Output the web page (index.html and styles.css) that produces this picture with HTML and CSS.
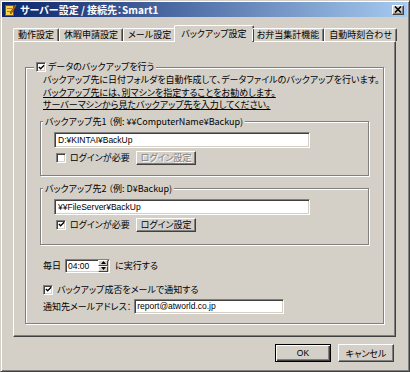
FILE: index.html
```html
<!DOCTYPE html>
<html lang="ja">
<head>
    <meta charset="UTF-8">
    <title>サーバー設定 / 接続先：Smart1</title>
    <link rel="stylesheet" href="styles.css">
</head>
<body>
    <div class="window">
        <div class="titlebar">
            <svg class="app-icon" width="13" height="13" viewBox="0 0 13 13">
                <rect x="1.5" y="2.5" width="8" height="10" fill="#f6d24a" stroke="#7a5a10"/>
                <line x1="3" y1="5.5" x2="8" y2="5.5" stroke="#b08020"/>
                <line x1="3" y1="8.5" x2="8" y2="8.5" stroke="#b08020"/>
                <path d="M6 10 L11.5 1.5 L12.5 2.5 L7 11 Z" fill="#e07020" stroke="#6a3000" stroke-width="0.6"/>
            </svg>
            <span class="title">サーバー設定 / 接続先：Smart1</span>
            <span class="close-btn">
                <svg width="8" height="7" viewBox="0 0 8 7">
                    <path d="M1 0.5 L7 6.5 M7 0.5 L1 6.5" stroke="#000" stroke-width="1.6"/>
                </svg>
            </span>
        </div>

        <div class="tabs">
            <div class="tab">動作設定</div>
            <div class="tab">休暇申請設定</div>
            <div class="tab">メール設定</div>
            <div class="tab active">バックアップ設定</div>
            <div class="tab">お弁当集計機能</div>
            <div class="tab">自動時刻合わせ</div>
        </div>

        <div class="panel">
            <fieldset class="group main-group">
                <legend>
                    <span class="check">
                        <svg width="8" height="8" viewBox="0 0 8 8"><path d="M1 3.5 L3 5.5 L7 1.5" fill="none" stroke="#000" stroke-width="1.5"/></svg>
                    </span>
                    データのバックアップを行う
                </legend>
                <div class="main-body">
                    <p class="note">
                        バックアップ先に日付フォルダを自動作成して、データファイルのバックアップを行います。<br>
                        <u>バックアップ先には、別マシンを指定することをお勧めします。</u><br>
                        <u>サーバーマシンから見たバックアップ先を入力してください。</u>
                    </p>

                    <fieldset class="group sub-group">
                        <legend>バックアップ先1 （例: ¥¥ComputerName¥Backup)</legend>
                        <div class="sub-body">
                            <div class="textbox path-box">D:¥KINTAI¥BackUp</div>
                            <div class="row login-row">
                                <span class="check"></span>
                                <span class="label">ログインが必要</span>
                                <span class="button small disabled">ログイン設定</span>
                            </div>
                        </div>
                    </fieldset>

                    <fieldset class="group sub-group second">
                        <legend>バックアップ先2 （例: D¥Backup)</legend>
                        <div class="sub-body">
                            <div class="textbox path-box">¥¥FileServer¥BackUp</div>
                            <div class="row login-row">
                                <span class="check">
                                    <svg width="8" height="8" viewBox="0 0 8 8"><path d="M1 3.5 L3 5.5 L7 1.5" fill="none" stroke="#000" stroke-width="1.5"/></svg>
                                </span>
                                <span class="label">ログインが必要</span>
                                <span class="button small">ログイン設定</span>
                            </div>
                        </div>
                    </fieldset>

                    <div class="row time-row">
                        <span>毎日</span>
                        <span class="textbox spin-box">
                            <span class="spin-value">04:00</span>
                            <span class="spin">
                                <span class="spin-btn"><svg width="5" height="3" viewBox="0 0 5 3"><path d="M2.5 0 L5 3 L0 3 Z" fill="#000"/></svg></span>
                                <span class="spin-btn"><svg width="5" height="3" viewBox="0 0 5 3"><path d="M0 0 L5 0 L2.5 3 Z" fill="#000"/></svg></span>
                            </span>
                        </span>
                        <span>に実行する</span>
                    </div>

                    <div class="row notify-row">
                        <span class="check">
                            <svg width="8" height="8" viewBox="0 0 8 8"><path d="M1 3.5 L3 5.5 L7 1.5" fill="none" stroke="#000" stroke-width="1.5"/></svg>
                        </span>
                        <span class="label">バックアップ成否をメールで通知する</span>
                    </div>

                    <div class="row mail-row">
                        <span>通知先メールアドレス：</span>
                        <div class="textbox mail-box">report@atworld.co.jp</div>
                    </div>
                </div>
            </fieldset>
        </div>

        <div class="buttons">
            <span class="button dialog-btn default">OK</span>
            <span class="button dialog-btn">キャンセル</span>
        </div>
    </div>
</body>
</html>
```

FILE: styles.css
```css
body {
    margin: 0;
    background-color: #d4d0c8;
    font-family: "Noto Sans CJK JP", sans-serif;
    font-size: 9px;
    font-feature-settings: "palt";
    color: #000;
}

.window {
    width: 410px;
    height: 372px;
    box-sizing: border-box;
    border: 1px solid;
    border-color: #d4d0c8 #404040 #404040 #d4d0c8;
    box-shadow: inset 1px 1px 0 #fff, inset -1px -1px 0 #808080;
    padding: 1px 2px 2px 1px;
    display: flex;
    flex-direction: column;
}

/* title bar */
.titlebar {
    height: 15px;
    display: flex;
    align-items: center;
    padding: 0 3px 0 2px;
    background: linear-gradient(to right, #0a246a, #a6caf0);
}

.app-icon {
    flex: none;
}

.title {
    margin-left: 3px;
    color: #fff;
    font-weight: bold;
    font-size: 10px;
    line-height: 15px;
}

.close-btn {
    margin-left: auto;
    width: 12px;
    height: 10px;
    box-sizing: border-box;
    display: flex;
    align-items: center;
    justify-content: center;
    background-color: #d4d0c8;
    border: 1px solid;
    border-color: #fff #404040 #404040 #fff;
    box-shadow: inset -1px -1px 0 #808080;
}

/* tabs */
.tabs {
    display: flex;
    align-items: flex-end;
    margin-top: 8px;
    padding-left: 11px;
    height: 16px;
    position: relative;
    z-index: 1;
}

.tab {
    height: 13px;
    box-sizing: border-box;
    padding: 0 4px;
    line-height: 12px;
    border-top: 1px solid #fff;
    border-left: 1px solid #fff;
    border-right: 1px solid #404040;
    box-shadow: inset -1px 0 0 #808080;
    border-radius: 2px 2px 0 0;
    white-space: nowrap;
}

.tab.active {
    height: 17px;
    margin: 0 -2px -1px;
    padding: 1px 6px 0;
    line-height: 13px;
    background-color: #d4d0c8;
}

/* tab page */
.panel {
    height: 296px;
    box-sizing: border-box;
    margin: 0 11px 0 11px;
    border: 1px solid;
    border-color: #fff #404040 #404040 #fff;
    box-shadow: inset -1px -1px 0 #808080;
    padding: 19px 11px 0 11px;
}

/* etched group boxes */
.group {
    margin: 0;
    padding: 0;
    border: 1px solid #808080;
    box-shadow: inset 1px 1px 0 #fff, 1px 1px 0 #fff;
    min-width: 0;
}

.group legend {
    padding: 0 2px;
    line-height: 12px;
    background-color: #d4d0c8;
    display: flex;
    align-items: center;
}

.main-group legend {
    margin-left: 8px;
}

.main-group legend .check {
    margin-right: 2px;
}

.main-body {
    padding: 0 14px 9px 14px;
}

.note {
    margin: 1px 0 0 3px;
    line-height: 12.5px;
    white-space: nowrap;
}

.sub-group {
    margin-top: 4px;
}

.sub-group.second {
    margin-top: 7px;
}

.sub-group legend {
    margin-left: 2px;
}

.sub-body {
    padding: 4px 0 10px 13px;
}

.second .sub-body {
    padding-bottom: 12px;
}

/* controls */
.check {
    width: 10px;
    height: 10px;
    box-sizing: border-box;
    flex: none;
    display: inline-flex;
    align-items: center;
    justify-content: center;
    background-color: #fff;
    border: 1px solid;
    border-color: #808080 #fff #fff #808080;
    box-shadow: inset 1px 1px 0 #404040, inset -1px -1px 0 #d4d0c8;
}

.check svg {
    width: 7px;
    height: 7px;
}

.textbox {
    box-sizing: border-box;
    background-color: #fff;
    border: 1px solid;
    border-color: #808080 #fff #fff #808080;
    box-shadow: inset 1px 1px 0 #404040, inset -1px -1px 0 #d4d0c8;
    padding: 0 3px;
    line-height: 14px;
    white-space: nowrap;
}

.path-box {
    width: 256px;
    height: 16px;
    font-family: "Liberation Sans", "Noto Sans CJK JP", sans-serif;
    font-size: 8.5px;
}

.row {
    display: flex;
    align-items: center;
}

.login-row {
    margin-top: 3px;
    height: 14px;
    padding-left: 2px;
}

.login-row .label {
    margin-left: 4px;
    width: 66px;
}

.button {
    box-sizing: border-box;
    display: inline-flex;
    align-items: center;
    justify-content: center;
    background-color: #d4d0c8;
    border: 1px solid;
    border-color: #fff #404040 #404040 #fff;
    box-shadow: inset -1px -1px 0 #808080;
    white-space: nowrap;
}

.button.small {
    width: 60px;
    height: 14px;
}

.button.disabled {
    color: #808080;
    text-shadow: 1px 1px 0 #fff;
}

.time-row {
    margin: 14px 0 0 3px;
    height: 14px;
}

.spin-box {
    width: 45px;
    height: 14px;
    margin: 0 5px 0 4px;
    padding: 0 0 0 2px;
    display: flex;
    align-items: center;
    font-family: "Liberation Sans", sans-serif;
    font-size: 8.5px;
    line-height: 12px;
}

.spin-value {
    flex: 1;
}

.spin {
    display: flex;
    flex-direction: column;
    width: 10px;
    height: 12px;
    margin-right: 1px;
}

.spin-btn {
    flex: 1;
    display: flex;
    align-items: center;
    justify-content: center;
    background-color: #d4d0c8;
    border: 1px solid;
    border-color: #fff #404040 #404040 #fff;
    box-sizing: border-box;
}

.notify-row {
    margin: 12px 0 0 3px;
    height: 10px;
}

.notify-row .label {
    margin-left: 4px;
}

.mail-row {
    margin: 4px 0 0 3px;
    height: 15px;
}

.mail-box {
    width: 150px;
    height: 15px;
    margin-left: 3px;
    padding-left: 2px;
    font-family: "Liberation Sans", sans-serif;
    font-size: 8.5px;
    line-height: 13px;
}

/* dialog buttons */
.buttons {
    display: flex;
    justify-content: flex-end;
    gap: 7px;
    margin-top: 7px;
    padding-right: 13px;
}

.dialog-btn {
    width: 56px;
    height: 18px;
}

.dialog-btn.default {
    border-color: #000;
    box-shadow: inset 1px 1px 0 #fff, inset -1px -1px 0 #404040, inset -2px -2px 0 #808080;
    font-family: "Liberation Sans", sans-serif;
    font-size: 8.5px;
}
```
